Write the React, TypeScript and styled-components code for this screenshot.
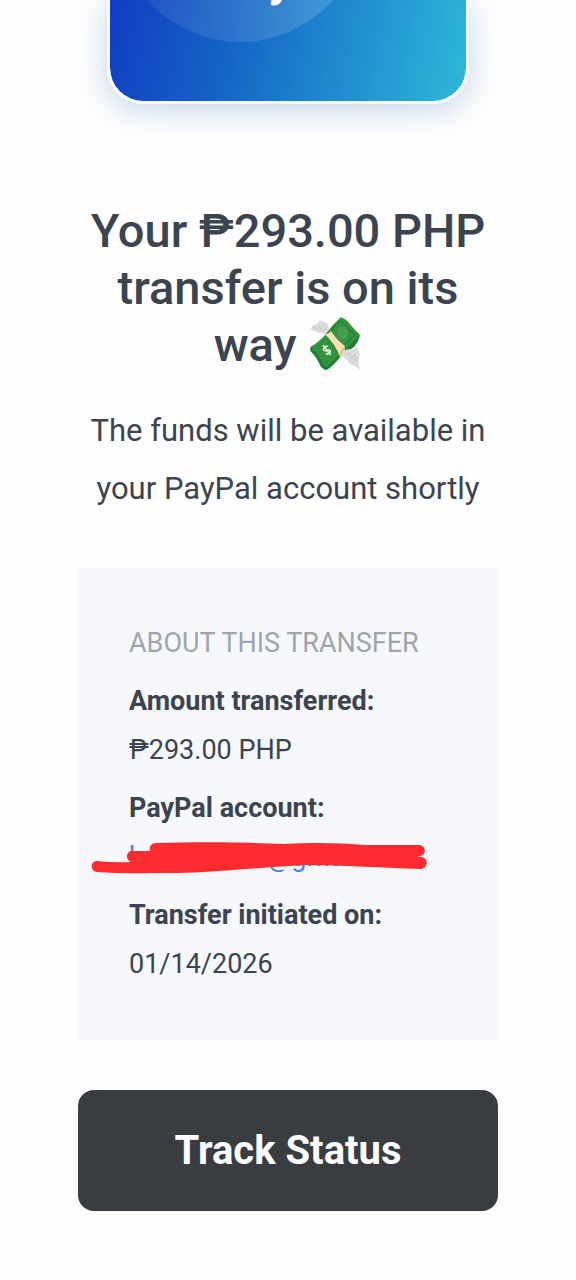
import React from "react";
import styled, { createGlobalStyle } from "styled-components";

const GlobalStyle = createGlobalStyle`
  *, *::before, *::after { box-sizing: border-box; }
  body {
    margin: 0;
    background: #fefefe;
    color: #3c444f;
    font-family: Roboto, "Liberation Sans", sans-serif;
  }
`;

const Page = styled.main`
  display: flex;
  flex-direction: column;
  padding: 0 78px 69px;
`;

const Hero = styled.div`
  align-self: center;
  width: 86%;
  height: 104px;
  margin-bottom: 98px;
  border: 3px solid #fafdff;
  border-top: 0;
  border-radius: 0 0 36px 36px;
  background: linear-gradient(102deg, #123fc2 2%, #1464c6 34%, #1f8ace 64%, #2cb6d8 98%) padding-box;
  box-shadow: 0 6px 32px rgba(30, 95, 190, 0.26);
  overflow: hidden;

  svg {
    display: block;
  }
`;

const Title = styled.h1`
  margin: 0 0 29px;
  font-size: 47px;
  line-height: 57px;
  font-weight: 500;
  text-align: center;

  svg {
    width: 54px;
    height: 54px;
    vertical-align: -10px;
  }
`;

const Lead = styled.p`
  margin: 0 0 50px;
  font-size: 31px;
  line-height: 58px;
  text-align: center;
`;

const Card = styled.section`
  padding: 51px;
  background: #f6f8fc;
  font-size: 27px;
  line-height: 49px;
`;

const CardTitle = styled.h2`
  margin: 0;
  color: #a0a5ad;
  font-size: inherit;
  font-weight: 400;
  text-transform: uppercase;
  white-space: nowrap;
`;

const Details = styled.dl`
  margin: 0;
`;

const Term = styled.dt`
  margin-top: 9px;
  font-weight: 700;
`;

const Value = styled.dd`
  position: relative;
  margin: 0;
`;

const Account = styled.a`
  display: flex;
  color: #4b82e0;
  text-decoration: none;
`;

const AccountStart = styled.span`
  width: 138px;
`;

const Marker = styled.svg`
  position: absolute;
  left: -49px;
  top: -3px;
`;

const Action = styled.button`
  height: 121px;
  margin-top: 50px;
  border: 0;
  border-radius: 16px;
  background: #393c40;
  color: #fdfdff;
  font-family: inherit;
  font-size: 40px;
  font-weight: 700;
  cursor: pointer;
`;

const HeroArt = () => (
  <svg width="355" height="101" viewBox="0 0 355 101" aria-hidden="true">
    <defs>
      <linearGradient id="glow" x1="0" y1="0" x2="1" y2="0">
        <stop offset="0" stopColor="#fff" stopOpacity="0.05" />
        <stop offset="1" stopColor="#fff" stopOpacity="0.17" />
      </linearGradient>
    </defs>
    <circle cx="130" cy="-82" r="124" fill="url(#glow)" />
    <text x="162" y="-4" fill="#fff" fontSize="46" fontWeight="700" fontStyle="italic">y</text>
  </svg>
);

const FlyingMoney = () => (
  <svg viewBox="52 38 148 152" role="img" aria-label="money with wings">
    <path d="M54 73 Q62 69 64 61 Q77 60 82 48 Q96 48 106 58 L112 82 L98 88 Q90 81 78 83 Q72 76 54 73Z" fill="#dcdcdf" />
    <path d="M65 66 L83 75 M78 57 L87 74 L92 60 L100 78" fill="none" stroke="#c4c5c9" strokeWidth="2" />
    <path d="M56 124 L57 134 Q76 154 84 174 Q88 183 101 188 Q120 178 141 150 L181 121 Q192 108 196 91 L188 80Z" fill="#1d7e36" />
    <path d="M57 122 Q79 110 99 88 Q116 62 142 39 Q158 43 171 61 Q181 73 196 88 Q180 104 152 130 Q126 152 104 179 Q93 174 87 159 Q75 137 57 122Z" fill="#36963f" />
    <path d="M69 123 Q88 111 101 99 L133 136 Q117 148 104 166 Q95 151 69 123Z" fill="none" stroke="#237d35" strokeWidth="2" />
    <path d="M115 79 Q127 58 142 50 Q151 56 161 68 Q172 80 183 88 L153 116" fill="none" stroke="#237d35" strokeWidth="3" />
    <ellipse cx="147" cy="83" rx="18" ry="20" fill="#459f48" stroke="#28883a" strokeWidth="2" />
    <path d="M99 88 Q108 85 115 78 Q130 102 153 119 L153 137 L141 152 Q125 111 99 88Z" fill="#ffe0b2" />
    <path d="M141 132 L153 120 L153 138 L141 152Z" fill="#e8c18b" />
    <g transform="translate(103 131) rotate(-38)">
      <path
        d="M8 -7 Q1 -13 -6 -8 Q-9 -1 0 1 Q9 3 6 9 Q0 13 -8 8 M0 -16 V17"
        fill="none"
        stroke="#e7f7e5"
        strokeWidth="4"
        strokeLinecap="round"
      />
    </g>
    <path d="M146 139 Q155 126 169 129 Q183 130 194 123 Q188 133 197 143 Q189 152 196 187 Q188 177 176 174 Q165 171 160 158 Q151 157 146 139Z" fill="#dcdcdf" />
    <path d="M156 145 L169 141 L171 157 L181 143 L184 162 L192 151" fill="none" stroke="#bcbdc2" strokeWidth="2" />
  </svg>
);

const Redaction = () => (
  <Marker width="360" height="60" viewBox="0 0 360 60" aria-hidden="true">
    <path
      d="M76 13 C115 12 165 12 204 14 C235 12 262 13 285 15 L340 15 C346 16 347 25 340 26 L337 27 L342 27 C349 29 348 38 341 39 C305 38 265 35 225 35 C180 37 125 44 75 43 Q43 44 17 42 C10 41 10 31 17 31 Q34 33 51 32 C45 30 46 21 52 21 L70 21 C69 17 71 13 76 13Z"
      fill="#ff2b2f"
    />
  </Marker>
);

export default function App() {
  return (
    <>
      <GlobalStyle />
      <Page>
        <Hero>
          <HeroArt />
        </Hero>
        <Title>
          Your ₱293.00 PHP transfer is on its way <FlyingMoney />
        </Title>
        <Lead>The funds will be available in your PayPal account shortly</Lead>
        <Card>
          <CardTitle>About this transfer</CardTitle>
          <Details>
            <Term>Amount transferred:</Term>
            <Value>₱293.00 PHP</Value>
            <Term>PayPal account:</Term>
            <Value>
              <Account href="#account">
                <AccountStart>h</AccountStart>
                <span>@gmail</span>
              </Account>
              <Redaction />
            </Value>
            <Term>Transfer initiated on:</Term>
            <Value>01/14/2026</Value>
          </Details>
        </Card>
        <Action type="button">Track Status</Action>
      </Page>
    </>
  );
}
